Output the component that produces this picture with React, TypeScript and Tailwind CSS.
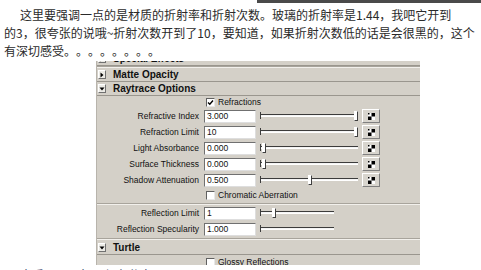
import React from "react";

const Arrow = ({ down }: { down?: boolean }) => (
  <div className="w-[8px] h-[9px] bg-[#ecebe6] border-t border-l border-t-white border-l-white border-b border-r border-b-[#707070] border-r-[#707070] flex items-center justify-center">
    <svg width="6" height="6" viewBox="0 0 6 6">
      {down ? <polygon points="0.5,1.5 5.5,1.5 3,4.5" fill="#000" /> : <polygon points="1.5,0.5 4.5,3 1.5,5.5" fill="#000" />}
    </svg>
  </div>
);

const Header = ({ label, down, h = "h-[14px]" }: { label: string; down?: boolean; h?: string }) => (
  <div className={`${h} flex items-center pl-[1px] border-b border-b-[#9a968e]`}>
    <Arrow down={down} />
    <span className="ml-[7px] text-[10px] font-bold text-[#111] leading-none">{label}</span>
  </div>
);

const Check = ({ checked }: { checked?: boolean }) => (
  <div className="w-[9px] h-[9px] bg-white border-t border-l border-t-[#606060] border-l-[#606060] border-b border-r border-b-[#e8e8e8] border-r-[#e8e8e8] flex items-center justify-center">
    {checked && (
      <svg width="7" height="7" viewBox="0 0 7 7">
        <polyline points="1,3.5 2.8,5.3 6,1.5" fill="none" stroke="#000" strokeWidth="1.4" />
      </svg>
    )}
  </div>
);

const CheckRow = ({ label, checked, h }: { label: string; checked?: boolean; h: string }) => (
  <div className={`${h} flex items-center pl-[109px]`}>
    <Check checked={checked} />
    <span className="ml-[3px] text-[8.5px] text-[#111] leading-none">{label}</span>
  </div>
);

const Slider = ({ thumb, width = 98 }: { thumb?: number; width?: number }) => (
  <div className="relative h-[12px]" style={{ width }}>
    <div className="absolute left-0 right-0 top-[4px] h-[3px] bg-[#f4f4f4] border-t border-t-[#3c3c3c] border-b border-b-white" />
    <div className="absolute left-0 top-[2px] h-[7px] w-[1px] bg-[#3c3c3c]" />
    {thumb !== undefined && (
      <div
        className="absolute top-[1px] w-[4px] h-[10px] bg-white border-t border-l border-t-white border-l-white border-b border-r border-b-[#404040] border-r-[#404040]"
        style={{ left: thumb }}
      />
    )}
  </div>
);

const MapBtn = () => (
  <div className="w-[18px] h-[14px] bg-[#d8d5ce] border-t border-l border-t-white border-l-white border-b border-r border-b-[#808080] border-r-[#808080] flex items-center justify-center">
    <svg width="7" height="7" viewBox="0 0 7 7">
      <rect x="0" y="0" width="7" height="7" fill="#fff" />
      <rect x="3.5" y="0" width="3.5" height="3.5" fill="#000" />
      <rect x="0" y="3.5" width="3.5" height="3.5" fill="#000" />
      <rect x="0" y="0" width="1.5" height="1.5" fill="#000" />
    </svg>
  </div>
);

const ParamRow = ({
  label,
  value,
  thumb,
  width = 98,
  btn = true,
  h = "h-[16px]",
}: {
  label: string;
  value: string;
  thumb?: number;
  width?: number;
  btn?: boolean;
  h?: string;
}) => (
  <div className={`${h} flex items-center`}>
    <div className="w-[102px] text-right text-[8.5px] text-[#111] leading-none whitespace-nowrap">{label}</div>
    <div className="ml-[5px] w-[52px] h-[13px] bg-white border-t border-l border-t-[#707070] border-l-[#707070] border-b border-r border-b-[#dedede] border-r-[#dedede] flex items-center pl-[2px] text-[8.5px] text-[#111] leading-none">
      {value}
    </div>
    <div className="ml-[4px]">
      <Slider thumb={thumb} width={width} />
    </div>
    {btn && (
      <div className="ml-[4px]">
        <MapBtn />
      </div>
    )}
  </div>
);

const Sep = () => <div className="h-[2px] border-t border-t-[#a8a49c] border-b border-b-[#f2f0ec]" />;

export default function App() {
  return (
    <div className="w-[481px] h-[270px] bg-white overflow-hidden">
      <div className="ml-[257px] h-[3px] bg-[#4a4a4a]" />
      <div className="pt-[3px] text-[12px] leading-[18px] text-[#2a2a2a] font-['Noto_Sans_CJK_SC','Noto_Sans',sans-serif] whitespace-nowrap [text-spacing-trim:space-all] [font-kerning:none]">
        <div className="pl-[20px]">这里要强调一点的是材质的折射率和折射次数。玻璃的折射率是1.44，我吧它开到</div>
        <div className="pl-[4px]">的3，很夸张的说哦~折射次数开到了10，要知道，如果折射次数低的话是会很黑的，这个</div>
        <div className="pl-[4px]">有深切感受。。。。。。。。</div>
      </div>
      <div className="mt-[1px] ml-[96px] w-[324px] h-[204px] bg-[#d4d0c8] overflow-hidden border-l border-l-[#b8b4ac] font-['Liberation_Sans',Arial,sans-serif]">
        <div className="h-[5px] overflow-hidden">
          <div className="-mt-[9px]">
            <Header label="Special Effects" />
          </div>
        </div>
        <Sep />
        <Header label="Matte Opacity" />
        <Header label="Raytrace Options" down />
        <CheckRow label="Refractions" checked h="h-[12px]" />
        <ParamRow label="Refractive Index" value="3.000" thumb={94} />
        <ParamRow label="Refraction Limit" value="10" thumb={94} />
        <ParamRow label="Light Absorbance" value="0.000" thumb={2} />
        <ParamRow label="Surface Thickness" value="0.000" thumb={2} />
        <ParamRow label="Shadow Attenuation" value="0.500" thumb={48} />
        <CheckRow label="Chromatic Aberration" h="h-[15px]" />
        <Sep />
        <ParamRow label="Reflection Limit" value="1" thumb={12} width={74} btn={false} />
        <ParamRow label="Reflection Specularity" value="1.000" width={74} btn={false} />
        <div className="h-[1px]" />
        <Sep />
        <div className="h-[1px]" />
        <Header label="Turtle" down />
        <CheckRow label="Glossy Reflections" h="h-[14px]" />
      </div>
      <div className="mt-[3px] pl-[20px] text-[12px] leading-[14px] text-[#1a2a5a] font-['Noto_Sans_CJK_SC',sans-serif] whitespace-nowrap">
        查看　原图相册保存分享
      </div>
    </div>
  );
}
